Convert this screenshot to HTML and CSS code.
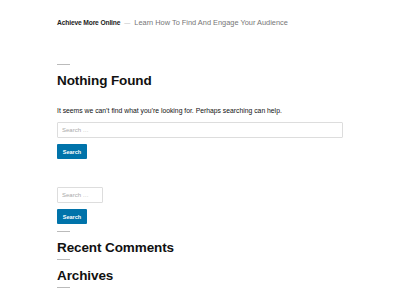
FILE: index.html
```html
<!DOCTYPE html>
<html lang="en">
  <head>
    <meta charset="UTF-8" />
    <meta name="viewport" content="width=device-width, initial-scale=1.0" />
    <title>Nothing Found – Achieve More Online</title>
    <link rel="stylesheet" href="styles.css">
  </head>
  <body>
    <header class="site-header">
      <p class="site-title">Achieve More Online</p>
      <span class="site-sep">—</span>
      <p class="site-description">Learn How To Find And Engage Your Audience</p>
    </header>

    <main class="site-main">
      <section class="no-results">
        <h1 class="page-title">Nothing Found</h1>
        <p class="page-text">It seems we can’t find what you’re looking for. Perhaps searching can help.</p>
        <form class="search-form">
          <input class="search-field wide" type="search" placeholder="Search …" />
          <button class="search-submit" type="button">Search</button>
        </form>
      </section>
    </main>

    <footer class="widget-area">
      <form class="search-form widget-search">
        <input class="search-field" type="search" placeholder="Search …" />
        <button class="search-submit" type="button">Search</button>
      </form>
      <h2 class="widget-title">Recent Comments</h2>
      <h2 class="widget-title">Archives</h2>
      <h2 class="widget-title"></h2>
    </footer>
  </body>
</html>
```

FILE: styles.css
```css
body {
  margin: 0;
  padding: 0 57px;
  background: #fff;
  color: #111;
  font-family: "Liberation Sans", Arial, sans-serif;
}
.site-header {
  display: flex;
  align-items: baseline;
  padding-top: 19px;
  font-size: 7px;
  line-height: 1.2;
}
.site-title {
  margin: 0;
  font-size: 6.7px;
  font-weight: 600;
  color: #222;
  letter-spacing: -0.15px;
}
.site-sep {
  margin: 0 4px;
  color: #aaa;
  font-size: 6px;
}
.site-description {
  margin: 0;
  font-size: 7.4px;
  color: #767676;
}
.site-main {
  padding-top: 36px;
}
.page-title,
.widget-title {
  margin: 0;
  font-size: 13.5px;
  font-weight: 700;
  line-height: 1.18;
  letter-spacing: -0.1px;
}
.page-title::before,
.widget-title::before {
  content: "";
  display: block;
  width: 13px;
  height: 1px;
  background: #bbb;
  margin-bottom: 8px;
}
.page-text {
  margin: 17px 0 0;
  font-size: 6.8px;
  line-height: 1.4;
}
.search-form {
  display: flex;
  flex-direction: column;
  align-items: flex-start;
  gap: 6px;
  margin-top: 7px;
}
.search-field {
  box-sizing: border-box;
  width: 46px;
  height: 16px;
  padding: 0 4px;
  border: 1px solid #ddd;
  border-radius: 1px;
  font-family: inherit;
  font-size: 6px;
  color: #666;
}
.search-field.wide {
  width: 286px;
}
.search-field::placeholder {
  color: #aaa;
}
.search-submit {
  box-sizing: border-box;
  width: 30px;
  height: 15px;
  padding: 0;
  border: 0;
  border-radius: 1px;
  background: #0073aa;
  color: #fff;
  font-family: inherit;
  font-size: 5.5px;
  font-weight: 700;
}
.widget-area {
  padding-top: 20px;
}
.widget-search {
  margin: 8px 0 7px;
}
.widget-title {
  margin-top: 4px;
}
.widget-title:first-of-type {
  margin-top: 7px;
}
.widget-title + .widget-title {
  margin-top: 3px;
}
```
